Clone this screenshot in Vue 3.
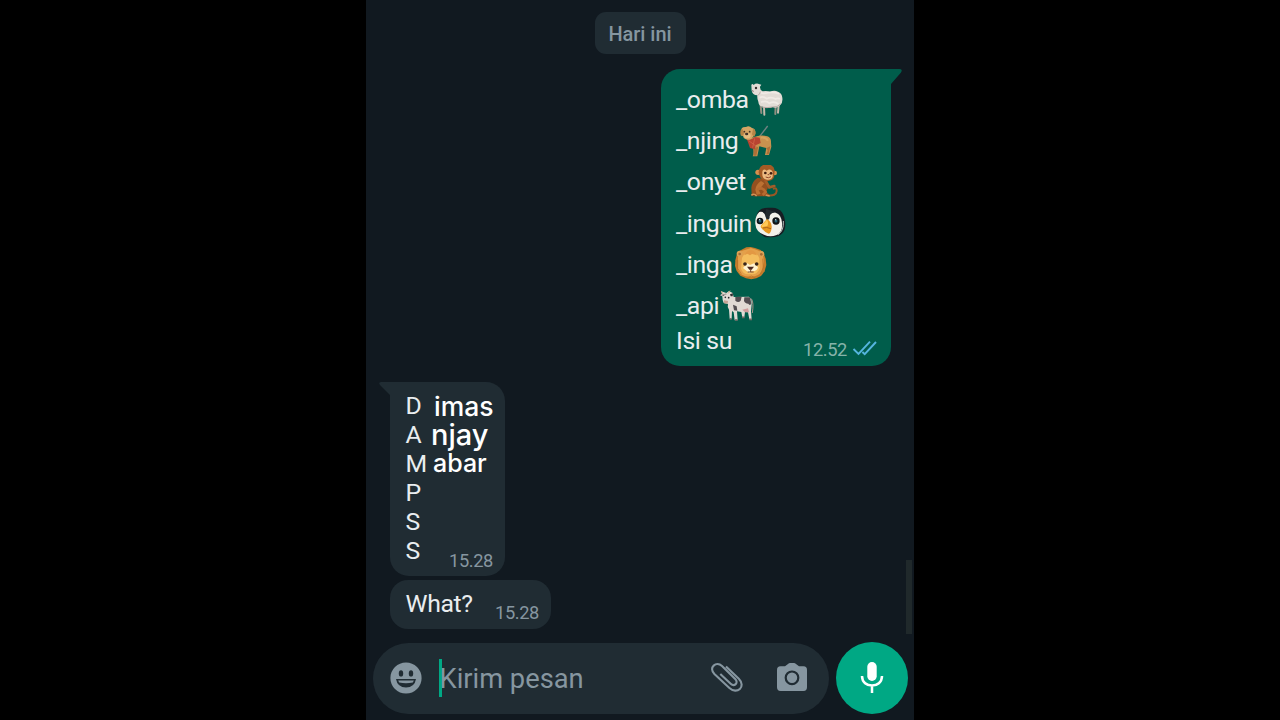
<script setup>
const animals = [
  { text: '_omba', kind: 'sheep' },
  { text: '_njing', kind: 'dog' },
  { text: '_onyet', kind: 'monkey' },
  { text: '_inguin', kind: 'penguin' },
  { text: '_inga', kind: 'lion' },
  { text: '_api', kind: 'cow' },
]
const letters = [
  { head: 'D', tail: 'imas', cls: 'imas' },
  { head: 'A', tail: 'njay', cls: 'njay' },
  { head: 'M', tail: 'abar', cls: 'abar' },
  { head: 'P' },
  { head: 'S' },
  { head: 'S' },
]
</script>

<template>
  <main class="stage">
    <section class="phone">
      <div class="date">Hari ini</div>

      <article class="bubble out">
        <svg class="tail-out" viewBox="0 0 14 18" width="14" height="18"><path d="M0 0H10.5Q14 .4 12 3.5L2 15V18H0Z" fill="#005d4b" /></svg>
        <div v-for="a in animals" :key="a.kind" class="animal">
          <span>{{ a.text }}</span>
          <svg v-if="a.kind === 'sheep'" class="emoji" viewBox="27 14 102 102">
            <g fill="none" stroke-linecap="round" stroke-width="6"><path d="M59 82L61 104M104 82L103 107" stroke="#8f8e80" /><path d="M69 84L70 109M113 80L111 103" stroke="#c5b9ab" /></g>
            <path d="M31 20Q34 14 38 20Q43 15 51 16L61 19L57 25Q56 35 65 39Q77 37 87 40Q100 35 111 40Q123 44 124 58Q126 72 118 80Q108 92 95 86Q80 93 65 85Q53 83 52 70Q48 62 49 51Q34 49 32 37Z" fill="#e2dcd6" />
            <path d="M57 42Q68 48 80 43Q98 40 114 46M56 58Q66 52 77 61Q90 54 104 62Q111 58 117 62M60 72Q76 65 85 75Q99 67 112 77" stroke="#f0eae5" stroke-width="5" fill="none" />
            <path d="M50 51Q57 49 58 40M62 86Q78 90 94 86Q109 88 119 77" stroke="#b9aaa5" stroke-width="3" fill="none" />
            <circle cx="45" cy="29" r="3.6" fill="#35302e" /><path d="M33 37L38 39" stroke="#7c6265" stroke-width="3" />
          </svg>
          <svg v-else-if="a.kind === 'dog'" class="emoji shift" viewBox="18 12 102 102">
            <path d="M77 49L101 18" stroke="#728382" stroke-width="4" />
            <path d="M60 51Q80 43 100 49Q112 53 111 68L112 80L105 105H93L97 84L76 79L70 109H56Q60 103 58 86L48 77L42 59Z" fill="#c8924f" />
            <path d="M59 84L59 107H67L73 80M98 84L101 92L97 103H104L109 79" fill="#ad7038" />
            <path d="M37 54Q47 65 62 51L77 53L80 69L65 76L62 88L48 84L43 70Z" fill="#b84331" />
            <path d="M44 62L67 79M62 55L56 83" stroke="#cd5e43" stroke-width="3" />
            <path d="M22 33Q20 20 36 21Q45 16 54 24Q64 25 64 38Q64 47 58 49Q52 61 41 59Q29 58 27 48L20 46Z" fill="#d6a564" />
            <path d="M26 28Q18 27 19 41L23 48L30 42ZM57 27Q65 27 65 41L60 51L54 43Z" fill="#b78445" />
            <ellipse cx="40" cy="47" rx="10" ry="8" fill="#e5bd80" /><ellipse cx="38" cy="42" rx="5" ry="4" fill="#433228" /><circle cx="31" cy="35" r="2.7" fill="#4b3424" /><circle cx="47" cy="35" r="2.7" fill="#4b3424" />
            <path d="M80 53Q96 51 102 62" stroke="#d7a35d" stroke-width="6" fill="none" />
          </svg>
          <svg v-else-if="a.kind === 'monkey'" class="emoji" viewBox="21 16 102 102">
            <path d="M82 107Q109 110 110 94Q110 83 101 87" stroke="#9a5723" stroke-width="6" fill="none" stroke-linecap="round" />
            <path d="M53 54Q36 65 34 84L35 105Q34 110 48 110H83Q91 108 84 101L76 99Q91 83 80 61Z" fill="#94501f" />
            <path d="M63 64Q48 74 46 90L50 105L62 103L56 91L73 71" fill="#bc7132" />
            <path d="M77 64L88 83L103 79" stroke="#a25d29" stroke-width="8" fill="none" stroke-linecap="round" /><path d="M52 91Q66 79 77 97L68 106" stroke="#b66b30" stroke-width="8" fill="none" />
            <circle cx="54" cy="38" r="8" fill="#d78f4e" /><circle cx="104" cy="40" r="7" fill="#d78f4e" />
            <path d="M56 38Q57 20 72 15Q101 10 104 34L102 52Q99 63 84 64Q60 65 56 38Z" fill="#a45b25" />
            <path d="M67 36Q70 25 80 33Q91 25 98 36L98 51Q94 61 83 60Q70 61 67 47Z" fill="#edba80" />
            <circle cx="76" cy="40" r="4" fill="#3c1b10" /><circle cx="93" cy="41" r="4" fill="#3c1b10" /><path d="M83 45L88 45M77 52Q85 57 93 51" stroke="#8e482b" stroke-width="3" fill="none" />
            <path d="M34 107Q42 101 50 109M77 106L89 109" stroke="#d29055" stroke-width="5" />
          </svg>
          <svg v-else-if="a.kind === 'penguin'" class="emoji shift" viewBox="27 13 102 102">
            <path d="M34 44Q40 18 69 18H82Q119 19 121 68Q121 106 80 107H61Q30 91 34 44Z" fill="#171d23" />
            <path d="M63 48Q58 27 43 31Q29 44 31 67Q33 91 57 99Q75 108 95 100Q114 92 111 63Q109 38 92 33Q75 31 70 49Z" fill="#f3f2eb" />
            <path d="M99 99Q117 88 115 58" stroke="#b9c2be" stroke-width="3" fill="none" />
            <path d="M64 22Q58 35 65 56Q75 54 74 43Q76 34 91 31" fill="#222a2f" />
            <circle cx="45" cy="58" r="10" fill="#101417" /><circle cx="93" cy="58" r="11" fill="#101417" /><circle cx="45" cy="58" r="4.5" fill="#246074" /><circle cx="93" cy="58" r="4.5" fill="#246074" /><circle cx="44" cy="54" r="2" fill="#dce9ec" /><circle cx="92" cy="54" r="2" fill="#dce9ec" />
            <path d="M66 52Q82 62 80 79Q78 95 71 96Q61 93 51 81Q43 75 51 68Z" fill="#e79922" /><path d="M66 54Q72 65 67 73L53 76Q46 75 52 69Z" fill="#ffc855" /><path d="M54 79Q64 75 78 81" stroke="#ad6418" stroke-width="3" fill="none" />
          </svg>
          <svg v-else-if="a.kind === 'lion'" class="emoji shift-small" viewBox="27 14 102 102">
            <path d="M44 25L54 20L64 15L77 14L90 17L107 23L116 33L122 49L124 68L119 87L108 101L94 108L79 111L63 108L46 100L35 86L30 70L31 54L35 38Z" fill="#c57c2b" />
            <path d="M39 48Q38 26 62 22L78 17L96 23Q118 31 116 60L111 87Q97 105 77 103Q47 104 39 83Z" fill="#e4a04a" />
            <circle cx="44" cy="34" r="9" fill="#dda254" /><circle cx="109" cy="35" r="9" fill="#dda254" /><circle cx="44" cy="35" r="4" fill="#a66a32" /><circle cx="109" cy="36" r="4" fill="#a66a32" />
            <path d="M51 47Q58 29 77 34Q98 29 103 48L104 79Q94 99 77 95Q55 99 48 79Z" fill="#f4bd5d" />
            <path d="M58 39Q67 23 77 24Q88 23 96 39L81 35L75 39L67 34Z" fill="#e39843" />
            <path d="M67 63L75 68L87 63L99 75Q97 88 79 87L75 93L64 85L54 77Z" fill="#fff3cf" />
            <circle cx="60" cy="65" r="5.5" fill="#38251b" /><circle cx="95" cy="65" r="5.5" fill="#38251b" /><path d="M66 73H87L80 82H73Z" fill="#4d2920" /><path d="M77 80V89M68 89H86" stroke="#7b4930" stroke-width="3" />
            <path d="M38 53V78L49 94M113 49L115 76L106 95M68 106L79 101L90 106" stroke="#b66f27" stroke-width="2" fill="none" />
          </svg>
          <svg v-else class="emoji" viewBox="15 14 102 102">
            <path d="M109 43Q117 55 112 86" stroke="#a59288" stroke-width="3" fill="none" />
            <path d="M20 26L18 20L25 23L34 26L42 20L53 26L56 38L102 37Q112 45 110 60L108 81L110 105H103L99 84L90 83L88 99H82L79 83L66 81L68 108H59L56 84L51 80L50 103H44L42 76Q36 68 39 59L26 56L23 47L22 36L15 33L21 28Z" fill="#e1dad4" />
            <path d="M50 105L44 103M60 107H68M81 99H89M103 105H111" stroke="#706864" stroke-width="5" />
            <path d="M61 38L80 37L77 49Q70 57 61 49ZM88 39L105 39L109 57Q106 67 100 58Q89 57 87 49ZM54 61L65 66L67 79L57 78Z" fill="#534d51" />
            <path d="M18 32L27 34L30 28L37 29M45 30L54 27L53 36L47 36Z" fill="#302e30" /><path d="M27 48L39 50L38 58L27 57Z" fill="#c5a394" /><circle cx="31" cy="39" r="2.5" fill="#27282b" /><circle cx="41" cy="40" r="2.5" fill="#27282b" />
            <path d="M82 76L99 72L102 84H90Z" fill="#d09c9c" /><path d="M19 21L23 28M45 19L40 27" stroke="#c5a87e" stroke-width="3" />
          </svg>
        </div>
        <div class="last-line">
          <span>Isi su</span>
          <span class="receipt">12.52
            <svg width="26" height="18" viewBox="0 0 26 18"><path d="M1.5 9L6.5 14L18 1.7M10.4 12L12.7 14.2L24 2" fill="none" stroke="#55b5df" stroke-width="1.9" /></svg>
          </span>
        </div>
      </article>

      <article class="bubble list">
        <svg class="tail-in" viewBox="0 0 13 18" width="13" height="18"><path d="M13 0H2Q-1 .4 1 3L11 13V18H13Z" fill="#202c33" /></svg>
        <div v-for="(l, i) in letters" :key="i" class="letter">
          <span class="head">{{ l.head }}</span><span v-if="l.tail" :class="['typed', l.cls]">{{ l.tail }}</span>
        </div>
        <time class="list-time">15.28</time>
      </article>

      <article class="bubble what"><span>What?</span><time>15.28</time></article>

      <footer class="composer">
        <div class="field">
          <svg class="smile" width="32" height="32" viewBox="0 0 32 32"><circle cx="16" cy="16" r="15.6" fill="#8696a0" /><ellipse cx="11" cy="11.4" rx="2.2" ry="3.2" fill="#202c33" /><ellipse cx="21" cy="11.4" rx="2.2" ry="3.2" fill="#202c33" /><path d="M6 17H26Q24.5 25.5 16 25.5T6 17Z" fill="#202c33" /><path d="M8.2 18.6H23.8L22.8 20.6Q16 22 9.2 20.6Z" fill="#8696a0" /></svg>
          <i class="caret"></i><span class="placeholder">Kirim pesan</span>
          <svg class="clip" width="34" height="32" viewBox="0 0 34 32"><path d="M16 4.4L28.8 16.7C36.5 24.5 27 33 19.4 26L4.4 12C-2 5.6 6.3-1.3 12 4L25.2 17C29 21 24.2 25.1 20.7 21.7L10.3 12" fill="none" stroke="#8696a0" stroke-width="2.1" /></svg>
          <svg class="camera" width="30" height="28" viewBox="0 0 30 28"><path d="M8 3.3L11 .9Q12 0 13 0H17Q18 0 19 .9L22 3.3H26.5Q30 3.3 30 7V24.3Q30 28 26.5 28H3.5Q0 28 0 24.3V7Q0 3.3 3.5 3.3Z" fill="#8696a0" /><circle cx="15" cy="14.8" r="6.3" fill="#8696a0" stroke="#202c33" stroke-width="2.2" /></svg>
        </div>
        <button class="voice" aria-label="Mic"><svg width="24" height="32" viewBox="0 0 24 32"><rect x="7.3" y="0" width="9.4" height="19" rx="4.7" fill="#fff" /><path d="M2 14C2 26.8 22 26.8 22 14M12 24V31" fill="none" stroke="#fff" stroke-width="2.5" /></svg></button>
      </footer>
      <div class="scrollbar"></div>
    </section>
  </main>
</template>

<style>
body { background: #000; overflow: hidden; }
</style>
<style scoped>
* { box-sizing: border-box; }
.stage { height: 720px; display: flex; justify-content: center; background: #000; font-family: Roboto, "Liberation Sans", sans-serif; }
.phone { position: relative; width: 548px; height: 720px; background: #111920; display: flex; flex-direction: column; }
.date { align-self: center; width: 91px; height: 42px; margin-top: 12px; border-radius: 11px; background: #202c33; color: #8596a0; font-size: 20px; font-weight: 500; line-height: 45px; text-align: center; letter-spacing: -.03px; }
.bubble { position: relative; color: #e9edef; font-size: 24.8px; letter-spacing: -.35px; background: #202c33; white-space: nowrap; }
.out { align-self: flex-end; width: 230px; height: 297px; margin: 15px 23px 0 0; padding: 10px 13px 0 15px; border-radius: 19px 0 19px 19px; background: #005d4b; }
.tail-out { position: absolute; left: 228px; top: 0; }
.animal { display: flex; align-items: center; height: 41.2px; }
.emoji { width: 34px; height: 34px; margin-left: 1px; }
.shift { margin-left: 2px; }
.shift-small { margin-left: 1.5px; }
.last-line { height: 29px; display: flex; justify-content: space-between; line-height: 29px; }
.receipt { display: flex; gap: 5px; align-items: center; padding-top: 18px; font-size: 18.3px; letter-spacing: -.4px; color: #86b3a9; }
.receipt svg { margin-top: -1px; }
.list { width: 115px; height: 194px; margin: 16px 0 0 24px; padding: 9px 0 0 15.5px; border-radius: 0 19px 19px 19px; }
.tail-in { position: absolute; left: -11px; top: 0; }
.letter { display: flex; height: 29px; align-items: center; line-height: 29px; }
.head { width: 26px; }
.typed { color: #fff; font-family: Inter, sans-serif; font-weight: 500; line-height: 29px; letter-spacing: 0; }
.imas { font-size: 26.5px; margin-left: 2.5px; position: relative; top: 1px; }
.njay { font-size: 29px; margin-left: -.5px; }
.abar { font-size: 25px; margin-left: 1.5px; }
time { color: #8696a0; font-size: 18.3px; letter-spacing: -.4px; }
.list-time { position: absolute; right: 12px; bottom: 5px; }
.what { width: 161px; height: 49px; display: flex; justify-content: space-between; margin: 4px 0 0 24px; padding: 0 12px 0 15.5px; border-radius: 18px; line-height: 48px; }
.what time { padding-top: 9px; }
.composer { display: flex; align-items: center; gap: 7px; margin: 13px 0 0 7px; }
.field { width: 456px; height: 71px; border-radius: 36px; background: #202c33; display: flex; align-items: center; padding: 0 22px 0 16.5px; }
.caret { width: 3px; height: 38px; background: #00a884; margin-left: 17px; }
.placeholder { margin-left: -2px; padding-top: 2px; color: #8696a0; font-size: 27.3px; }
.clip { margin-left: auto; margin-right: -.5px; }
.camera { margin-left: 34px; margin-top: -2px; }
.voice { width: 72px; height: 72px; border: 0; padding: 0; border-radius: 50%; background: #00a884; display: flex; align-items: center; justify-content: center; }
.scrollbar { position: absolute; right: 2px; top: 560px; width: 6px; height: 74px; background: #20292b; }
</style>
